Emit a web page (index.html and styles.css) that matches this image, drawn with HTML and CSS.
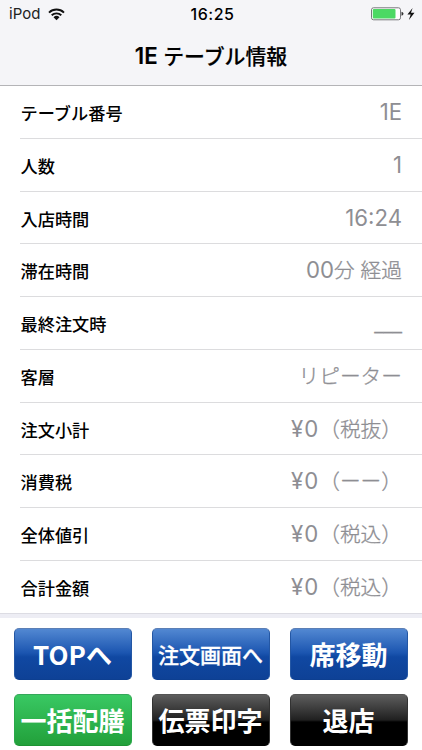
FILE: index.html
```
<!DOCTYPE html>
<html lang="ja">
<head>
<meta charset="utf-8">
<title>1E テーブル情報</title>
<link rel="stylesheet" href="styles.css">
</head>
<body>
<header class="header">
  <div class="status">
    <div class="carrier">iPod
      <svg class="wifi" width="17" height="13" viewBox="0 0 17 13" fill="none" stroke="#111" stroke-width="1.9"><path d="M1 4.6a10.8 10.8 0 0 1 15 0M3.7 7.3a7 7 0 0 1 9.6 0"/><path d="M8.5 12.2 5.5 9.3a4.3 4.3 0 0 1 6 0z" fill="#111" stroke="none"/></svg>
    </div>
    <div class="clock">16:25</div>
    <div class="power">
      <svg width="45" height="14" viewBox="0 0 45 14"><rect x=".5" y=".8" width="29" height="12" rx="2" fill="#fff" stroke="#77777b"/><rect x="1.8" y="2" width="22.7" height="9.6" rx="1" fill="#4cd964"/><path d="M30.5 4.8q2 .3 2 2t-2 2z" fill="#333"/><path d="M41.6.9 36.4 7.6h3.3L37.9 13l5.6-7.2H40z" fill="#111"/></svg>
    </div>
  </div>
  <h1 class="title"><span class="latin">1E</span> テーブル情報</h1>
</header>
<main class="list">
  <div class="row"><span class="label">テーブル番号</span><span class="value"><span class="latin">1E</span></span></div>
  <div class="row"><span class="label">人数</span><span class="value"><span class="latin">1</span></span></div>
  <div class="row"><span class="label">入店時間</span><span class="value"><span class="latin">16:24</span></span></div>
  <div class="row"><span class="label">滞在時間</span><span class="value"><span class="latin">00</span>分 経過</span></div>
  <div class="row"><span class="label">最終注文時</span><span class="value blank">___</span></div>
  <div class="row"><span class="label">客層</span><span class="value">リピーター</span></div>
  <div class="row"><span class="label">注文小計</span><span class="value"><span class="latin yen">¥0</span>（税抜）</span></div>
  <div class="row"><span class="label">消費税</span><span class="value"><span class="latin yen">¥0</span>（ーー）</span></div>
  <div class="row"><span class="label">全体値引</span><span class="value"><span class="latin yen">¥0</span>（税込）</span></div>
  <div class="row"><span class="label">合計金額</span><span class="value"><span class="latin yen">¥0</span>（税込）</span></div>
</main>
<div class="band"></div>
<nav class="actions">
  <button class="btn blue">TOPへ</button>
  <button class="btn blue small">注文画面へ</button>
  <button class="btn blue">席移動</button>
  <button class="btn green">一括配膳</button>
  <button class="btn black">伝票印字</button>
  <button class="btn black">退店</button>
</nav>
</body>
</html>
```
FILE: styles.css
```
* { box-sizing: border-box; }
body {
  margin: 0;
  width: 422px;
  height: 750px;
  overflow: hidden;
  background: #fff;
  color: #000;
  font-family: Inter, "Noto Sans CJK JP", sans-serif;
}
.header {
  height: 86px;
  background: #f5f5f8;
  border-bottom: 1px solid #b4b4b7;
}
.status {
  height: 28px;
  padding: 0 6px 0 9px;
  display: grid;
  grid-template-columns: 1fr auto 1fr;
  align-items: center;
  font-size: 15px;
  line-height: 28px;
}
.carrier { display: flex; align-items: center; gap: 8px; color: #222; }
.wifi { display: block; }
.clock { font-size: 16px; font-weight: 500; letter-spacing: .5px; }
.power { display: flex; justify-content: flex-end; }
.title {
  margin: 0;
  height: 56px;
  line-height: 58px;
  text-align: center;
  font-size: 20.9px;
  font-weight: 500;
  -webkit-text-stroke: .15px #000;
}
.title .latin { font-weight: 600; }
.latin { font-size: 22.2px; line-height: 1; }
.list { height: 526.5px; display: grid; grid-template-rows: repeat(10, 52.75px); }
.row {
  margin-left: 20px;
  padding-right: 20px;
  display: flex;
  justify-content: space-between;
  border-bottom: 1px solid #dcdcde;
  white-space: nowrap;
}
.row:last-child { border-bottom: 0; }
.label {
  padding-left: .5px;
  font-size: 17.2px;
  line-height: 56px;
  font-weight: 500;
}
.value {
  font-size: 20.7px;
  line-height: 54px;
  font-weight: 300;
  color: #8e8e93;
  -webkit-text-stroke: .3px #8e8e93;
}
.value .latin { font-weight: 400; -webkit-text-stroke: 0; }
.value .yen { letter-spacing: 1px; }
.blank { line-height: 55px; }
.band { height: 5px; background: #ededf4; border-top: 1px solid #dcdce3; }
.actions {
  padding: 10px 14px 0;
  display: grid;
  grid-template-columns: repeat(3, 118px);
  justify-content: space-between;
  row-gap: 14px;
}
.btn {
  height: 52px;
  padding: 0 1px 0 0;
  border: 1px solid;
  border-radius: 5px;
  color: #fff;
  font: bold 26px/50px "Noto Sans CJK JP", sans-serif;
  white-space: nowrap;
}
.small { font-size: 21px; font-weight: 500; -webkit-text-stroke: .3px #fff; }
.blue {
  border-color: #5c7fb5 #2457a4 #0d3f91;
  background: linear-gradient(#5288d2, #1b55b0 48%, #1048a2 56%, #0e4196);
}
.green {
  border-color: #35a75a #29a84a #1d9332;
  background: linear-gradient(#39c863, #22a03a);
}
.black {
  border-color: #555 #333 #000;
  background: linear-gradient(#5d5d5d, #202020 50%, #000 54%);
}
```
